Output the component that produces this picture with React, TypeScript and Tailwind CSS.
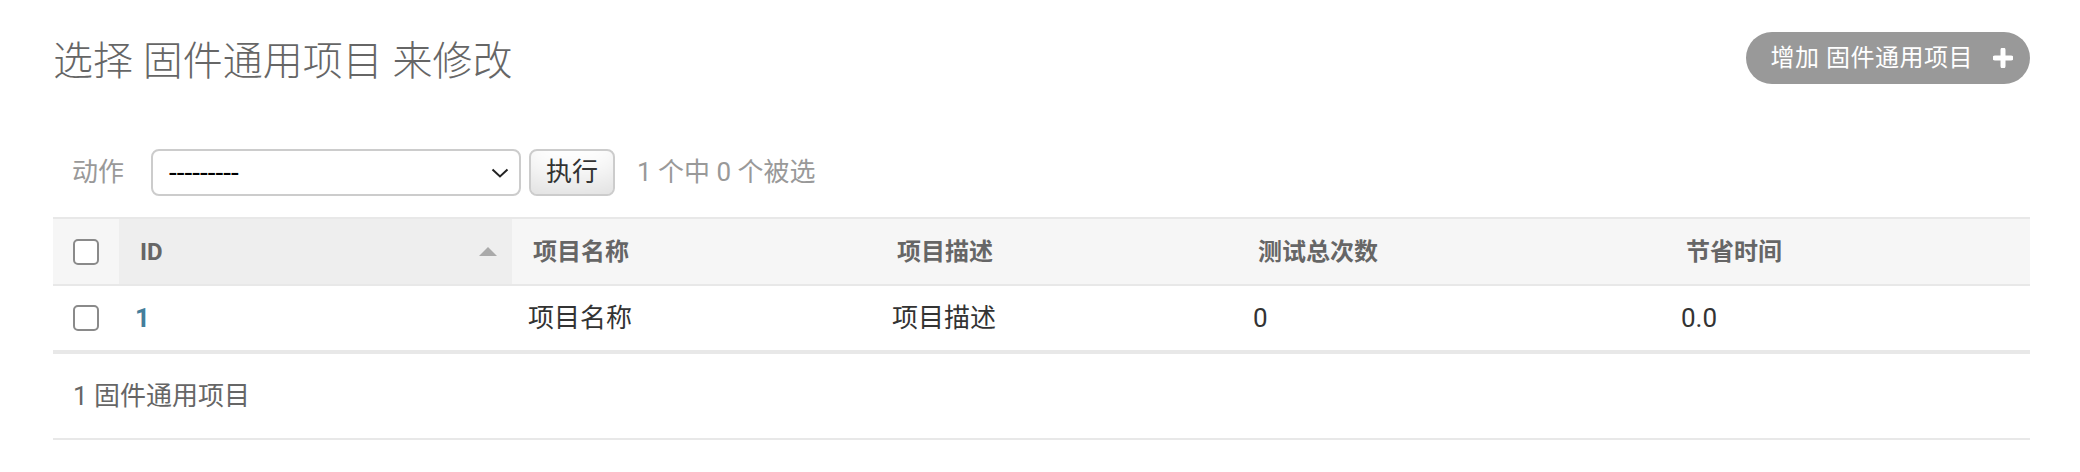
import React from 'react';

const grid = 'grid grid-cols-[66px_393px_364px_361px_428px_1fr]';

function Checkbox() {
    return <span className="block w-[26px] h-[26px] rounded-[5px] border-2 border-[#8a8a8a] bg-white" />;
}

function PlusIcon() {
    return (
        <svg width="20" height="20" viewBox="0 0 20 20" className="block">
            <path d="M10 2v16M2 10h16" stroke="white" strokeWidth="5" strokeLinecap="round" />
        </svg>
    );
}

export default function App() {
    const columns = ['项目名称', '项目描述', '测试总次数', '节省时间'];
    const row = ['项目名称', '项目描述', '0', '0.0'];

    return (
        <div className="w-[2080px] h-[472px] overflow-hidden bg-white pl-[53px] pr-[50px] pt-[32px] font-['Roboto','Noto_Sans_CJK_SC',sans-serif]">
            {/* title + add button */}
            <div className="flex items-center justify-between h-[52px]">
                <h1 className="pt-[7px] text-[40px] leading-[45px] font-light text-[#666]">
                    选择 固件通用项目 来修改
                </h1>
                <a className="flex items-center h-[52px] pl-[25px] pr-[17px] gap-[20px] rounded-full bg-[#999] text-white text-[24px] tracking-[0.5px]">
                    <span>增加 固件通用项目</span>
                    <PlusIcon />
                </a>
            </div>

            {/* actions */}
            <div className="flex items-center h-[47px] mt-[65px] pl-[19px] text-[26px] text-[#999]">
                <span>动作</span>
                <div className="ml-[27px] w-[370px] h-[47px] flex items-center justify-between pl-[16px] pr-[10px] border-2 border-[#ccc] rounded-[8px] text-[28px] text-black">
                    <span>---------</span>
                    <svg width="18" height="10" viewBox="0 0 18 10">
                        <path d="M1.5 1.5l7.5 7 7.5-7" fill="none" stroke="#222" strokeWidth="2" />
                    </svg>
                </div>
                <button className="ml-[8px] w-[86px] h-[47px] border-2 border-[#ccc] rounded-[8px] bg-white shadow-[inset_0_-30px_40px_-20px_rgba(0,0,0,0.15)] text-[26px] text-[#333]">
                    执行
                </button>
                <span className="ml-[22px]">1 个中 0 个被选</span>
            </div>

            {/* results */}
            <div className="mt-[21px]">
                <div className={`${grid} border-y-2 border-[#e8e8e8] bg-[#f6f6f6] text-[24px] font-bold text-[#666]`}>
                    <div className="h-[65px] flex items-center pl-[20px]">
                        <Checkbox />
                    </div>
                    <div className="h-[65px] flex items-center justify-between pl-[21px] pr-[15px] bg-[#eee]">
                        <span>ID</span>
                        <svg width="18" height="9" viewBox="0 0 18 9">
                            <path d="M9 0L18 9H0z" fill="#aaa" />
                        </svg>
                    </div>
                    {columns.map((c) => (
                        <div key={c} className="h-[65px] flex items-center pl-[21px]">
                            {c}
                        </div>
                    ))}
                </div>

                <div className={`${grid} border-b-2 border-[#e8e8e8] text-[26px] text-[#333]`}>
                    <div className="h-[64px] flex items-center pl-[20px]">
                        <Checkbox />
                    </div>
                    <div className="h-[64px] flex items-center pl-[16px] font-bold text-[#447e9b]">1</div>
                    {row.map((v, i) => (
                        <div key={i} className="h-[64px] flex items-center pl-[16px]">
                            {v}
                        </div>
                    ))}
                </div>

                <div className="h-[88px] border-y-2 border-[#e8e8e8] flex items-center pl-[20px] text-[26px] text-[#666]">
                    1 固件通用项目
                </div>
            </div>
        </div>
    );
}
